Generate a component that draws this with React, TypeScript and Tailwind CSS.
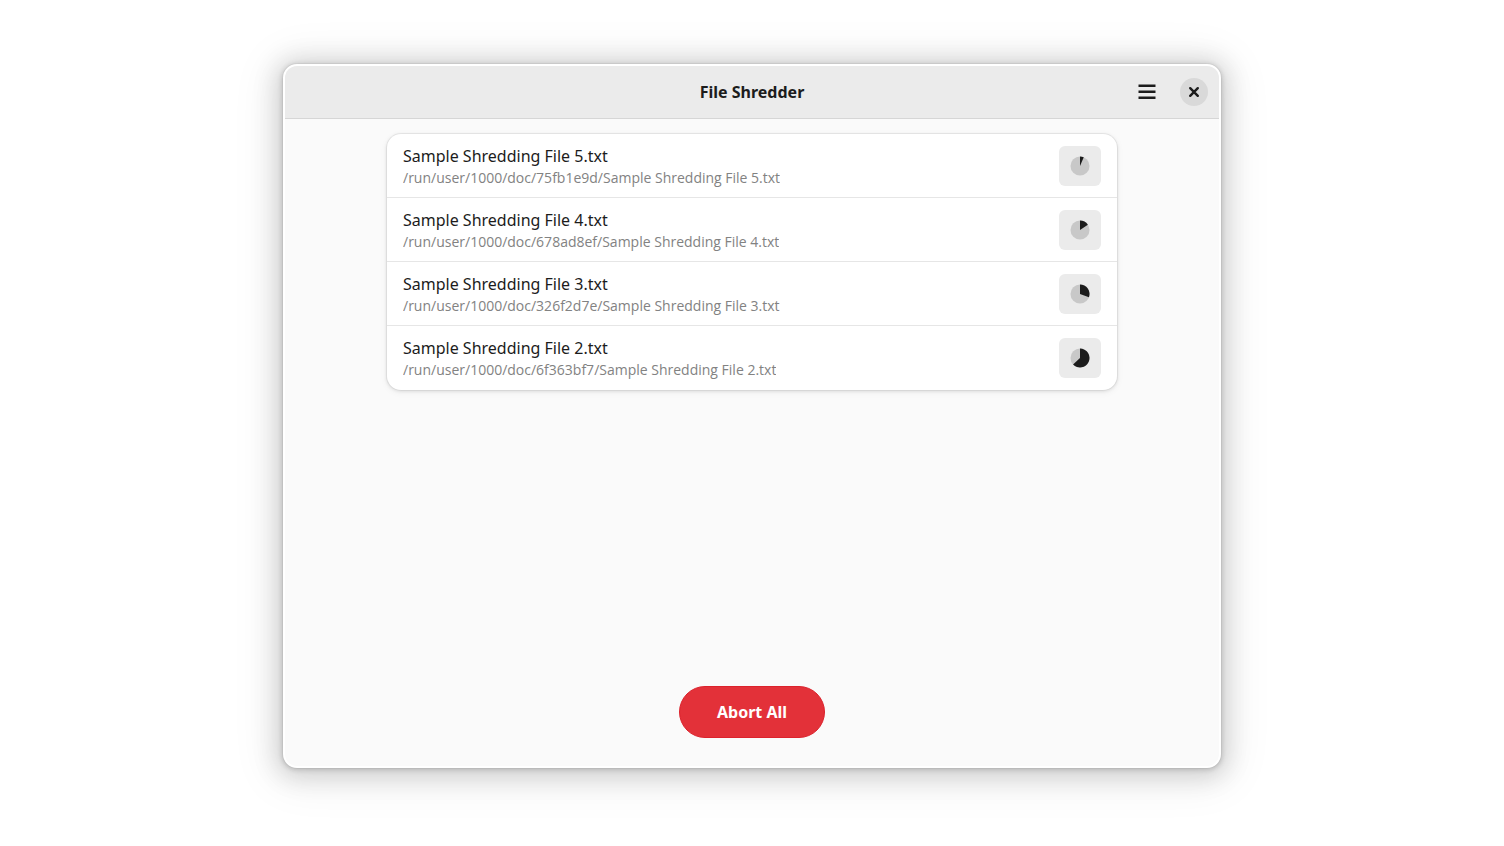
type ShredJob = { name: string; path: string; progress: number };

const jobs: ShredJob[] = [
  { name: "Sample Shredding File 5.txt", path: "/run/user/1000/doc/75fb1e9d/Sample Shredding File 5.txt", progress: 0.065 },
  { name: "Sample Shredding File 4.txt", path: "/run/user/1000/doc/678ad8ef/Sample Shredding File 4.txt", progress: 0.155 },
  { name: "Sample Shredding File 3.txt", path: "/run/user/1000/doc/326f2d7e/Sample Shredding File 3.txt", progress: 0.305 },
  { name: "Sample Shredding File 2.txt", path: "/run/user/1000/doc/6f363bf7/Sample Shredding File 2.txt", progress: 0.63 },
];

function ProgressPie({ value }: { value: number }) {
  const angle = value * 2 * Math.PI;
  const r = 9.5;
  const x = 10 + r * Math.sin(angle);
  const y = 10 - r * Math.cos(angle);
  return (
    <svg viewBox="0 0 20 20" className="size-5" aria-hidden="true">
      <circle cx="10" cy="10" r={r} fill="#c8c8c8" />
      <path d={`M10 10V${10 - r}A${r} ${r} 0 ${value > 0.5 ? 1 : 0} 1 ${x} ${y}Z`} fill="#1c1c1c" />
    </svg>
  );
}

function JobRow({ job }: { job: ShredJob }) {
  return (
    <li className="flex h-16 items-center justify-between border-b border-[#e6e6e6] px-4 last:border-b-0">
      <div className="min-w-0">
        <p className="truncate text-base leading-6 text-[#1c1c1c]">{job.name}</p>
        <p className="truncate font-['Open_Sans',sans-serif] text-sm leading-5 text-[#828282]">{job.path}</p>
      </div>
      <button
        type="button"
        aria-label={`Abort ${job.name}`}
        className="flex h-10 w-[42px] shrink-0 items-center justify-center rounded-md bg-[#ebebeb]"
      >
        <ProgressPie value={job.progress} />
      </button>
    </li>
  );
}

export default function App() {
  return (
    <div className="flex min-h-screen items-stretch justify-center bg-white px-6 pt-16 pb-[78px] font-['Noto_Sans',sans-serif]">
      <main className="flex w-full max-w-[938px] flex-col overflow-hidden rounded-[14px] border-2 border-white bg-[#fafafa] shadow-[0_0_0_1px_rgba(0,0,0,0.03),0_1px_5px_1px_rgba(0,0,0,0.16),0_3px_24px_7px_rgba(0,0,0,0.14),0_4px_44px_14px_rgba(0,0,0,0.06)]">
        <header className="grid h-[53px] shrink-0 grid-cols-[1fr_auto_1fr] items-center border-b border-[#d6d6d6] bg-[#ebebeb] px-[11px]">
          <h1 className="col-start-2 text-base font-bold text-[#1c1c1c]">File Shredder</h1>
          <div className="flex items-center justify-end gap-[15px]">
            <button type="button" aria-label="Main menu" className="flex size-9 items-center justify-center">
              <svg viewBox="0 0 18 16" className="h-4 w-[18px]" fill="#1c1c1c" aria-hidden="true">
                <path d="M.5 .5h17v2.5H.5zM.5 6.5h17V9H.5zM.5 12.5h17V15H.5z" />
              </svg>
            </button>
            <button type="button" aria-label="Close" className="flex size-7 items-center justify-center rounded-full bg-[#d9d9d9]">
              <svg viewBox="0 0 12 12" className="size-3" fill="none" stroke="#1c1c1c" strokeWidth="2.4" strokeLinecap="round" aria-hidden="true">
                <path d="M2.2 2.2l7.6 7.6M9.8 2.2L2.2 9.8" />
              </svg>
            </button>
          </div>
        </header>
        <div className="flex flex-1 flex-col items-center justify-between px-6 pt-[15px] pb-7">
          <ul className="w-full max-w-[730px] overflow-hidden rounded-[14px] bg-white shadow-[0_0_0_1px_rgba(0,0,0,0.05),0_1px_3px_1px_rgba(0,0,0,0.08),0_2px_6px_2px_rgba(0,0,0,0.03)]">
            {jobs.map((job) => (
              <JobRow key={job.name} job={job} />
            ))}
          </ul>
          <button type="button" className="h-[52px] rounded-full border border-[#dc222c] bg-[#e33139] px-[37px] text-base font-bold text-white">
            Abort All
          </button>
        </div>
      </main>
    </div>
  );
}
